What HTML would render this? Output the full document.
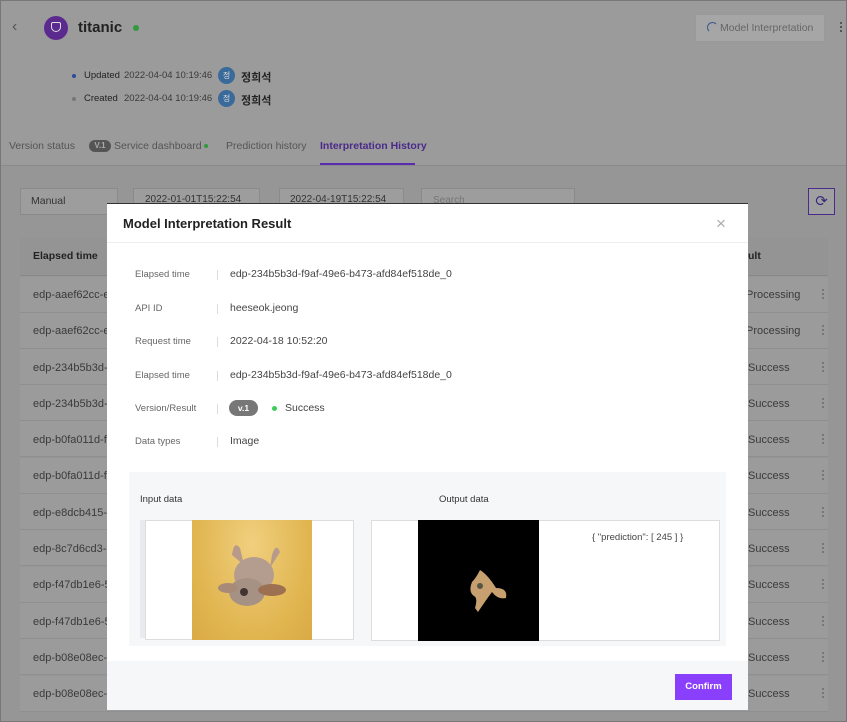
<!DOCTYPE html>
<html><head><meta charset="utf-8"><style>
*{margin:0;padding:0;box-sizing:border-box}
body{width:847px;height:722px;overflow:hidden;font-family:"Liberation Sans","Noto Sans CJK KR",sans-serif;background:#9b9b9b;position:relative;color:#222;font-size:11px}
.a{position:absolute;white-space:nowrap}
.g{color:#3a3a3a}
.row{position:absolute;left:20px;width:808px;height:36px;border-bottom:1px solid #8f8f8f;background:#9b9b9b}
.lbl{position:absolute;left:28px;font-size:9.5px;color:#666}
.val{position:absolute;left:123px;font-size:10.5px;color:#444}
.sep{position:absolute;left:110px;width:1px;height:10px;background:#ddd}
.d{position:absolute;left:822px;width:2px;height:2px;background:#777;box-shadow:0 4px 0 #777,0 8px 0 #777}
</style></head><body>
<div class="a" style="left:0;top:0;width:847px;height:722px;border:1px solid #777;z-index:5"></div>
<!-- header -->
<div class="a" style="left:12px;top:18px;font-size:16px;color:#555">‹</div>
<div class="a" style="left:44px;top:16px;width:24px;height:24px;border-radius:50%;background:#5b2a8f"></div>
<div class="a" style="left:51px;top:22px;width:10px;height:10px;border:1.5px solid #ddd;border-radius:2px 2px 50% 50%"></div>
<div class="a" style="left:78px;top:19px;font-size:15px;font-weight:bold;color:#222">titanic</div>
<div class="a" style="left:133px;top:25px;width:6px;height:6px;border-radius:50%;background:#2f9a3e"></div>
<div class="a" style="left:695px;top:14px;width:130px;height:28px;background:#a6a6a6;border:1px solid #999"></div>
<div class="a" style="left:707px;top:22px;width:11px;height:11px;border:1.5px solid #3b5a8a;border-right-color:transparent;border-bottom-color:transparent;border-radius:50%"></div>
<div class="a" style="left:720px;top:22px;font-size:10.5px;color:#666">Model Interpretation</div>
<div class="a" style="left:840px;top:22px;width:2px;height:2px;background:#555;box-shadow:0 4px 0 #555,0 8px 0 #555"></div>
<div class="a" style="left:72px;top:74px;width:4px;height:4px;border-radius:50%;background:#2a4a9a"></div>
<div class="a" style="left:84px;top:70px;font-size:9.5px">Updated</div>
<div class="a g" style="left:124px;top:70px;font-size:9.5px">2022-04-04 10:19:46</div>
<div class="a" style="left:218px;top:67px;width:17px;height:17px;border-radius:50%;background:#3a6a9a;color:#ddd;font-size:8px;text-align:center;line-height:17px">정</div>
<div class="a" style="left:241px;top:69px;font-size:11px;font-weight:bold">정희석</div>
<div class="a" style="left:72px;top:97px;width:4px;height:4px;border-radius:50%;background:#777"></div>
<div class="a" style="left:84px;top:93px;font-size:9.5px">Created</div>
<div class="a g" style="left:124px;top:93px;font-size:9.5px">2022-04-04 10:19:46</div>
<div class="a" style="left:218px;top:90px;width:17px;height:17px;border-radius:50%;background:#3a6a9a;color:#ddd;font-size:8px;text-align:center;line-height:17px">정</div>
<div class="a" style="left:241px;top:92px;font-size:11px;font-weight:bold">정희석</div>
<!-- tabs -->
<div class="a" style="left:9px;top:140px;font-size:10.5px;color:#555">Version status</div>
<div class="a" style="left:89px;top:140px;width:22px;height:12px;border-radius:6px;background:#555;color:#aaa;font-size:8px;text-align:center;line-height:12px;font-weight:bold">V.1</div>
<div class="a" style="left:114px;top:140px;font-size:10.5px;color:#555">Service dashboard</div>
<div class="a" style="left:204px;top:144px;width:4px;height:4px;border-radius:50%;background:#2f9a3e"></div>
<div class="a" style="left:226px;top:140px;font-size:10.5px;color:#555">Prediction history</div>
<div class="a" style="left:320px;top:140px;font-size:10.5px;font-weight:bold;color:#4a2a8a">Interpretation History</div>
<div class="a" style="left:320px;top:163px;width:95px;height:2px;background:#5a2ab0"></div>
<div class="a" style="left:0;top:165px;width:847px;height:1px;background:#8a8a8a"></div>
<div class="a" style="left:0;top:166px;width:847px;height:556px;background:#969696"></div>
<!-- filters -->
<div class="a" style="left:20px;top:188px;width:98px;height:27px;background:#9d9d9d;border:1px solid #8a8a8a"></div>
<div class="a" style="left:31px;top:195px;font-size:10.5px;color:#333">Manual</div>
<div class="a" style="left:133px;top:188px;width:127px;height:27px;border:1px solid #8a8a8a;background:#9d9d9d"></div>
<div class="a" style="left:145px;top:194px;font-size:10px;color:#333">2022-01-01T15:22:54</div>
<div class="a" style="left:279px;top:188px;width:125px;height:27px;border:1px solid #8a8a8a;background:#9d9d9d"></div>
<div class="a" style="left:290px;top:194px;font-size:10px;color:#333">2022-04-19T15:22:54</div>
<div class="a" style="left:421px;top:188px;width:154px;height:27px;border:1px solid #8a8a8a;background:#9d9d9d"></div>
<div class="a" style="left:433px;top:195px;font-size:10px;color:#777">Search</div>
<div class="a" style="left:808px;top:188px;width:27px;height:27px;border:1px solid #4a2a8a;background:#a0a0a0;color:#3a2a7a;font-size:15px;text-align:center;line-height:25px">⟳</div>
<!-- table -->
<div class="a" style="left:20px;top:238px;width:808px;height:38px;background:#949494;border-bottom:1px solid #888"></div>
<div class="a" style="left:33px;top:250px;font-size:10.5px;font-weight:bold">Elapsed time</div>
<div class="a" style="left:748px;top:250px;font-size:10.5px;font-weight:bold">ult</div>
<div class="row" style="top:277px"></div>
<div class="row" style="top:313px"></div>
<div class="row" style="top:349px"></div>
<div class="row" style="top:385px"></div>
<div class="row" style="top:421px"></div>
<div class="row" style="top:458px"></div>
<div class="row" style="top:494px"></div>
<div class="row" style="top:530px"></div>
<div class="row" style="top:567px"></div>
<div class="row" style="top:603px"></div>
<div class="row" style="top:639px"></div>
<div class="row" style="top:676px"></div>
<div class="a g" style="left:33px;top:289px">edp-aaef62cc-e1</div>
<div class="a g" style="left:33px;top:325px">edp-aaef62cc-e1</div>
<div class="a g" style="left:33px;top:362px">edp-234b5b3d-f9</div>
<div class="a g" style="left:33px;top:398px">edp-234b5b3d-f9</div>
<div class="a g" style="left:33px;top:434px">edp-b0fa011d-fe</div>
<div class="a g" style="left:33px;top:470px">edp-b0fa011d-fe</div>
<div class="a g" style="left:33px;top:507px">edp-e8dcb415-51</div>
<div class="a g" style="left:33px;top:543px">edp-8c7d6cd3-53</div>
<div class="a g" style="left:33px;top:579px">edp-f47db1e6-5c</div>
<div class="a g" style="left:33px;top:616px">edp-f47db1e6-5c</div>
<div class="a g" style="left:33px;top:652px">edp-b08e08ec-7f</div>
<div class="a g" style="left:33px;top:688px">edp-b08e08ec-7f</div>
<div class="a g" style="left:746px;top:289px">Processing</div>
<div class="a g" style="left:746px;top:325px">Processing</div>
<div class="a g" style="left:748px;top:362px">Success</div>
<div class="a g" style="left:748px;top:398px">Success</div>
<div class="a g" style="left:748px;top:434px">Success</div>
<div class="a g" style="left:748px;top:470px">Success</div>
<div class="a g" style="left:748px;top:507px">Success</div>
<div class="a g" style="left:748px;top:543px">Success</div>
<div class="a g" style="left:748px;top:579px">Success</div>
<div class="a g" style="left:748px;top:616px">Success</div>
<div class="a g" style="left:748px;top:652px">Success</div>
<div class="a g" style="left:748px;top:688px">Success</div>
<div class="d" style="top:289px"></div><div class="d" style="top:325px"></div><div class="d" style="top:362px"></div>
<div class="d" style="top:398px"></div><div class="d" style="top:434px"></div><div class="d" style="top:470px"></div>
<div class="d" style="top:507px"></div><div class="d" style="top:543px"></div><div class="d" style="top:579px"></div>
<div class="d" style="top:616px"></div><div class="d" style="top:652px"></div><div class="d" style="top:688px"></div>
<!-- modal -->
<div class="a" style="left:107px;top:203px;width:641px;height:506px;background:#fff;border-top:1px solid #333">
 <div class="a" style="left:16px;top:12px;font-size:13px;font-weight:bold;color:#222">Model Interpretation Result</div>
 <div class="a" style="left:609px;top:10px;font-size:17px;color:#aaa">×</div>
 <div class="a" style="left:0;top:38px;width:641px;height:1px;background:#eee"></div>
 <div class="lbl" style="top:65px">Elapsed time</div><div class="sep" style="top:66px"></div><div class="val" style="top:64px">edp-234b5b3d-f9af-49e6-b473-afd84ef518de_0</div>
 <div class="lbl" style="top:99px">API ID</div><div class="sep" style="top:100px"></div><div class="val" style="top:98px">heeseok.jeong</div>
 <div class="lbl" style="top:132px">Request time</div><div class="sep" style="top:133px"></div><div class="val" style="top:131px">2022-04-18 10:52:20</div>
 <div class="lbl" style="top:166px">Elapsed time</div><div class="sep" style="top:167px"></div><div class="val" style="top:165px">edp-234b5b3d-f9af-49e6-b473-afd84ef518de_0</div>
 <div class="lbl" style="top:199px">Version/Result</div><div class="sep" style="top:200px"></div>
 <div class="a" style="left:122px;top:196px;width:29px;height:16px;border-radius:8px;background:#777;color:#fff;font-size:8.5px;font-weight:bold;text-align:center;line-height:16px">v.1</div>
 <div class="a" style="left:165px;top:202px;width:5px;height:5px;border-radius:50%;background:#3ccc5a"></div>
 <div class="val" style="left:178px;top:198px">Success</div>
 <div class="lbl" style="top:232px">Data types</div><div class="sep" style="top:233px"></div><div class="val" style="top:231px">Image</div>
 <div class="a" style="left:22px;top:268px;width:597px;height:174px;background:#f6f7f9">
  <div class="a" style="left:11px;top:22px;font-size:9.5px;color:#333">Input data</div>
  <div class="a" style="left:310px;top:22px;font-size:9.5px;color:#333">Output data</div>
  <div class="a" style="left:11px;top:48px;width:205px;height:118px;background:#e9eaed"></div>
  <div class="a" style="left:16px;top:48px;width:209px;height:120px;background:#fff;border:1px solid #ddd"></div>
  <div class="a" style="left:63px;top:48px;width:120px;height:120px;background:radial-gradient(ellipse at 50% 20%,#f0cf7e,#e0b44e 70%,#d9aa45)">
   <svg width="120" height="120" viewBox="0 0 120 120">
    <path d="M40 35 Q42 20 48 28 L52 45 Z" fill="#b89a8a"/>
    <path d="M80 35 Q84 22 88 32 L78 48 Z" fill="#b89a8a"/>
    <ellipse cx="62" cy="55" rx="20" ry="18" fill="#b49d8f"/>
    <ellipse cx="55" cy="72" rx="18" ry="14" fill="#a69284"/>
    <ellipse cx="80" cy="70" rx="14" ry="6" fill="#9c7050"/>
    <ellipse cx="36" cy="68" rx="10" ry="5" fill="#a88a78"/>
    <circle cx="52" cy="72" r="4" fill="#433"/>
   </svg>
  </div>
  <div class="a" style="left:242px;top:48px;width:349px;height:121px;background:#fff;border:1px solid #ddd"></div>
  <div class="a" style="left:289px;top:48px;width:121px;height:121px;background:#000">
   <svg width="121" height="121" viewBox="0 0 121 121">
    <path d="M62 50 Q70 55 78 68 Q90 68 88 78 Q80 80 74 72 Q68 80 60 92 L57 88 Q60 78 56 76 Q50 72 54 62 Q58 58 62 50 Z" fill="#c8a070"/>
    <circle cx="62" cy="66" r="3" fill="#554"/>
   </svg>
  </div>
  <div class="a" style="left:463px;top:60px;font-size:9.5px;color:#444">{ "prediction": [ 245 ] }</div>
 </div>
 <div class="a" style="left:0;top:457px;width:641px;height:49px;background:#f6f7f9"></div>
 <div class="a" style="left:568px;top:470px;width:57px;height:26px;background:#8a3ffc;color:#fff;font-size:9.5px;font-weight:bold;text-align:center;line-height:26px">Confirm</div>
</div>
</body></html>
